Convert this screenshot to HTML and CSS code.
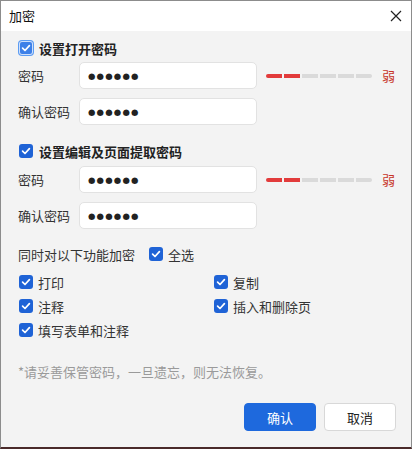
FILE: index.html
```html
<!DOCTYPE html>
<html lang="zh">
<head>
<meta charset="utf-8">
<link rel="stylesheet" href="styles.css">
</head>
<body>
<div class="window">
  <div class="titlebar">
    <span class="title">加密</span>
    <svg class="close" width="12" height="12" viewBox="0 0 12 12"><path d="M1 1L11 11M11 1L1 11" stroke="#222" stroke-width="1.2" fill="none"/></svg>
  </div>
  <div class="content">
    <div class="head">
      <span class="cb focus"><svg viewBox="0 0 14 14"><path d="M3.6 7.2L6 9.5L10.4 4.6" stroke="#fff" stroke-width="1.7" fill="none" stroke-linecap="round" stroke-linejoin="round"/></svg></span>
      <span class="head-text">设置打开密码</span>
    </div>
    <div class="row first">
      <span class="label">密码</span>
      <div class="input"><span class="dots">●●●●●●</span></div>
      <div class="bar"><i class="on"></i><i class="on"></i><i></i><i></i><i></i><i></i></div>
      <span class="weak">弱</span>
    </div>
    <div class="row">
      <span class="label">确认密码</span>
      <div class="input"><span class="dots">●●●●●●</span></div>
    </div>

    <div class="head second">
      <span class="cb"><svg viewBox="0 0 14 14"><path d="M3.6 7.2L6 9.5L10.4 4.6" stroke="#fff" stroke-width="1.7" fill="none" stroke-linecap="round" stroke-linejoin="round"/></svg></span>
      <span class="head-text">设置编辑及页面提取密码</span>
    </div>
    <div class="row first second-first">
      <span class="label">密码</span>
      <div class="input"><span class="dots">●●●●●●</span></div>
      <div class="bar"><i class="on"></i><i class="on"></i><i></i><i></i><i></i><i></i></div>
      <span class="weak">弱</span>
    </div>
    <div class="row">
      <span class="label">确认密码</span>
      <div class="input"><span class="dots">●●●●●●</span></div>
    </div>

    <div class="also">
      <span class="also-text">同时对以下功能加密</span>
      <span class="cb"><svg viewBox="0 0 14 14"><path d="M3.6 7.2L6 9.5L10.4 4.6" stroke="#fff" stroke-width="1.7" fill="none" stroke-linecap="round" stroke-linejoin="round"/></svg></span>
      <span class="opt-text">全选</span>
    </div>

    <div class="options">
      <div class="opt"><span class="cb"><svg viewBox="0 0 14 14"><path d="M3.6 7.2L6 9.5L10.4 4.6" stroke="#fff" stroke-width="1.7" fill="none" stroke-linecap="round" stroke-linejoin="round"/></svg></span><span class="opt-text">打印</span></div>
      <div class="opt"><span class="cb"><svg viewBox="0 0 14 14"><path d="M3.6 7.2L6 9.5L10.4 4.6" stroke="#fff" stroke-width="1.7" fill="none" stroke-linecap="round" stroke-linejoin="round"/></svg></span><span class="opt-text">复制</span></div>
      <div class="opt"><span class="cb"><svg viewBox="0 0 14 14"><path d="M3.6 7.2L6 9.5L10.4 4.6" stroke="#fff" stroke-width="1.7" fill="none" stroke-linecap="round" stroke-linejoin="round"/></svg></span><span class="opt-text">注释</span></div>
      <div class="opt"><span class="cb"><svg viewBox="0 0 14 14"><path d="M3.6 7.2L6 9.5L10.4 4.6" stroke="#fff" stroke-width="1.7" fill="none" stroke-linecap="round" stroke-linejoin="round"/></svg></span><span class="opt-text">插入和删除页</span></div>
      <div class="opt"><span class="cb"><svg viewBox="0 0 14 14"><path d="M3.6 7.2L6 9.5L10.4 4.6" stroke="#fff" stroke-width="1.7" fill="none" stroke-linecap="round" stroke-linejoin="round"/></svg></span><span class="opt-text">填写表单和注释</span></div>
    </div>

    <div class="hint">*请妥善保管密码，一旦遗忘，则无法恢复。</div>

    <div class="buttons">
      <button class="btn primary">确认</button>
      <button class="btn">取消</button>
    </div>
  </div>
</div>
</body>
</html>
```
FILE: styles.css
```css
html, body {
  margin: 0;
  padding: 0;
  background: #f3f3f3;
}
body {
  font-family: "Noto Sans CJK SC", "Noto Sans", sans-serif;
  font-size: 13px;
  color: #333;
}
.window {
  width: 412px;
  height: 449px;
  box-sizing: border-box;
  border: 1px solid #8c8c8c;
  border-bottom: 2px solid #4a2a2a;
  background: #f3f3f3;
  display: flex;
  flex-direction: column;
}
.titlebar {
  height: 30px;
  background: #fff;
  display: flex;
  align-items: center;
  justify-content: space-between;
  padding: 0 9px 0 8px;
  flex-shrink: 0;
}
.title {
  font-size: 13px;
  color: #111;
  line-height: 18px;
}
.close {
  width: 12px;
  height: 12px;
}
.content {
  padding: 7px 15px 0 17px;
  display: flex;
  flex-direction: column;
}
.head {
  display: flex;
  align-items: center;
  height: 20px;
  gap: 6px;
}
.head.second {
  margin-top: 16px;
}
.head-text {
  font-weight: bold;
  color: #222;
  font-size: 13px;
}
.cb {
  width: 14px;
  height: 14px;
  border-radius: 3px;
  background: #1f63d6;
  display: inline-flex;
  align-items: center;
  justify-content: center;
  flex-shrink: 0;
  margin-left: 1px;
}
.cb svg {
  width: 14px;
  height: 14px;
}
.cb.focus {
  background: #3d80e8;
  box-shadow: 0 0 0 1px #5b9cf3, inset 0 0 0 1px #cfe0fb;
}
.row {
  display: flex;
  align-items: center;
  margin-top: 9px;
  height: 27px;
}
.row.first {
  margin-top: 4px;
}
.row.second-first {
  margin-top: 5px;
}
.label {
  width: 61px;
  color: #333;
}
.input {
  width: 178px;
  height: 27px;
  box-sizing: border-box;
  background: #fff;
  border: 1px solid #e2e2e2;
  border-radius: 5px;
  display: flex;
  align-items: center;
  padding-left: 8px;
}
.dots {
  font-family: "DejaVu Sans", sans-serif;
  font-size: 8.5px;
  color: #222;
  letter-spacing: 1.2px;
}
.bar {
  display: flex;
  gap: 2px;
  margin-left: 9px;
}
.bar i {
  display: block;
  width: 16px;
  height: 4px;
  background: #dadada;
}
.bar i:first-child {
  border-radius: 2px 0 0 2px;
}
.bar i:last-child {
  border-radius: 0 2px 2px 0;
}
.bar i.on {
  background: #e23b3b;
}
.weak {
  margin-left: 10px;
  color: #c73528;
  font-size: 13px;
}
.also {
  display: flex;
  align-items: center;
  height: 20px;
  margin-top: 15px;
}
.also-text {
  width: 130px;
}
.opt-text {
  margin-left: 5px;
  color: #333;
}
.options {
  display: grid;
  grid-template-columns: 195px 1fr;
  row-gap: 4px;
  margin-top: 8px;
}
.opt {
  display: flex;
  align-items: center;
  height: 20px;
}
.hint {
  margin-top: 22px;
  color: #9a9a9a;
  line-height: 20px;
}
.buttons {
  display: flex;
  justify-content: flex-end;
  gap: 8px;
  margin-top: 21px;
}
.btn {
  width: 72px;
  height: 28px;
  border-radius: 4px;
  border: 1px solid #d8d8d8;
  background: #fff;
  font-family: "Noto Sans CJK SC", sans-serif;
  font-size: 13px;
  color: #222;
  padding: 0;
}
.btn.primary {
  background: #1e69dd;
  border-color: #1e69dd;
  color: #fff;
}
```
